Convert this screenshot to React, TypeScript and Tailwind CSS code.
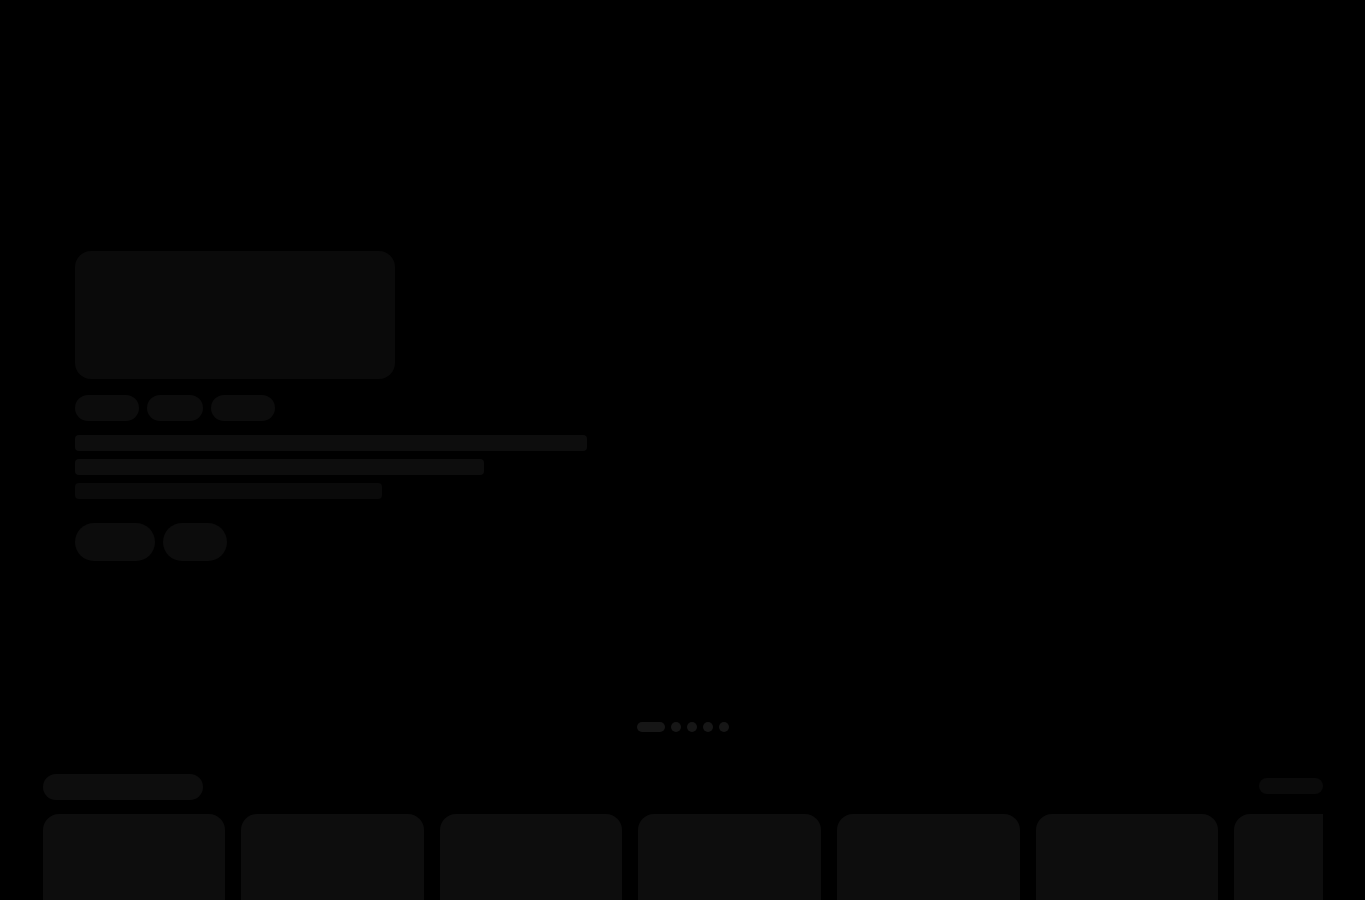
export default function App() {
  const cards = [0, 1, 2, 3, 4, 5, 6];
  return (
    <div className="min-h-screen h-[900px] overflow-hidden bg-black" style={{ fontFamily: '"Liberation Sans", sans-serif' }}>
      <div className="mx-auto max-w-[1280px]">
        <div className="px-8 pt-[251px]">
          <div className="h-[128px] w-[320px] rounded-2xl bg-[#0a0a0a]" />
          <div className="mt-4 flex gap-2">
            <div className="h-[26px] w-16 rounded-full bg-[#0c0c0c]" />
            <div className="h-[26px] w-14 rounded-full bg-[#0c0c0c]" />
            <div className="h-[26px] w-16 rounded-full bg-[#0c0c0c]" />
          </div>
          <div className="mt-[14px] flex w-[512px] flex-col gap-2">
            <div className="h-4 w-full rounded bg-[#0d0d0d]" />
            <div className="h-4 w-[80%] rounded bg-[#0d0d0d]" />
            <div className="h-4 w-[60%] rounded bg-[#0a0a0a]" />
          </div>
          <div className="mt-6 flex gap-2">
            <div className="h-[38px] w-20 rounded-full bg-[#0c0c0c]" />
            <div className="h-[38px] w-16 rounded-full bg-[#0c0c0c]" />
          </div>
        </div>
        <div className="mt-[161px] flex justify-center gap-1.5">
          <div className="h-2.5 w-7 rounded-full bg-[#161616]" />
          <div className="h-2.5 w-2.5 rounded-full bg-[#161616]" />
          <div className="h-2.5 w-2.5 rounded-full bg-[#161616]" />
          <div className="h-2.5 w-2.5 rounded-full bg-[#161616]" />
          <div className="h-2.5 w-2.5 rounded-full bg-[#161616]" />
        </div>
        <div className="mt-[42px] flex items-start justify-between">
          <div className="h-[26px] w-40 rounded-full bg-[#0d0d0d]" />
          <div className="mt-1 h-4 w-16 rounded-full bg-[#0a0a0a]" />
        </div>
        <div className="mt-[14px] flex gap-4 overflow-hidden">
          {cards.map((c) => (
            <div key={c} className="h-[260px] w-[182.67px] shrink-0 rounded-2xl bg-[#0d0d0d]" />
          ))}
        </div>
      </div>
    </div>
  );
}
